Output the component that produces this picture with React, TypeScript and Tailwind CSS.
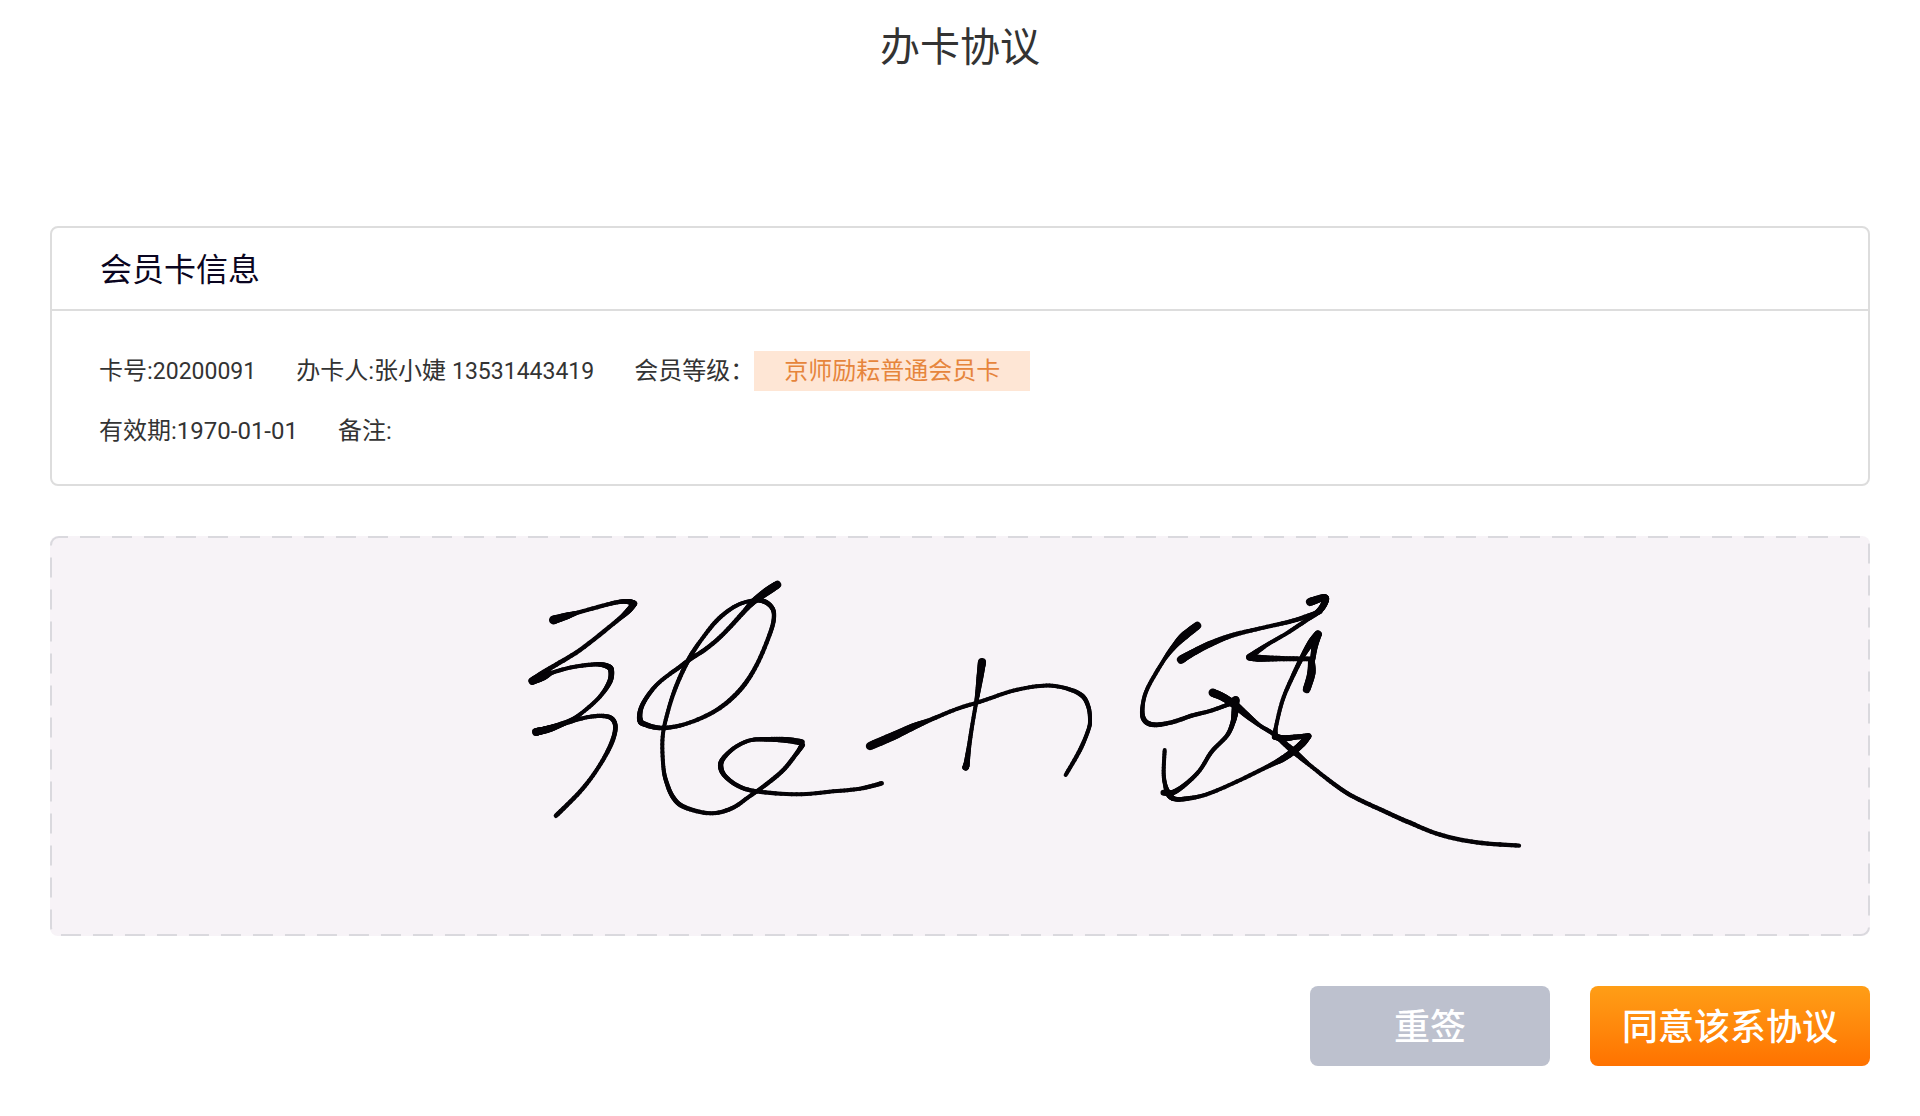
type Point = [x: number, y: number, width: number];

const FONT = "font-['Roboto','Noto_Sans_CJK_SC',sans-serif]";

// Pen strokes: x, y and pen width at each sampled point
const strokes: Point[][] = [
  // 张
  [[160, 180, 26], [200, 168, 20], [240, 156, 11], [345, 128, 12], [385, 125, 14], [402, 131, 18]],
  [[402, 131, 18], [385, 152, 17], [350, 183, 12], [240, 270, 12], [150, 325, 13], [97, 363, 22]],
  [[97, 363, 22], [130, 351, 20], [160, 337, 11], [220, 321, 11], [290, 313, 12], [325, 320, 16], [334, 335, 16], [328, 368, 15], [295, 415, 11], [240, 463, 11], [205, 484, 12], [150, 505, 18], [108, 516, 22]],
  [[108, 516, 22], [150, 506, 20], [200, 489, 11], [260, 472, 11], [310, 468, 12], [338, 478, 13], [346, 508, 13], [330, 560, 13], [290, 630, 11], [240, 695, 12], [168, 767, 13]],
  [[832, 74, 22], [800, 95, 24], [760, 125, 18], [730, 157, 13], [670, 222, 12], [620, 265, 12], [570, 298, 12], [540, 320, 12], [480, 365, 11], [445, 405, 12], [423, 445, 13], [420, 480, 16], [435, 493, 15], [485, 504, 13], [560, 491, 11], [650, 450, 12], [720, 390, 13], [770, 315, 12], [812, 215, 12], [822, 165, 12], [812, 138, 13], [785, 122, 14], [745, 124, 10], [700, 142, 11], [650, 182, 12], [600, 245, 11], [565, 300, 13], [530, 375, 12], [505, 450, 11], [488, 530, 11], [490, 620, 11], [500, 668, 12], [520, 713, 13], [553, 741, 13], [630, 760, 11], [695, 745, 12], [750, 708, 11], [800, 672, 12], [850, 630, 12], [890, 580, 12], [907, 555, 15]],
  [[905, 547, 18], [860, 540, 17], [800, 538, 13], [750, 541, 11], [705, 562, 11], [670, 595, 13], [662, 620, 15], [675, 648, 13], [715, 678, 12], [770, 694, 12], [890, 703, 11], [1000, 694, 11], [1080, 686, 11], [1145, 670, 13]],
  // 小
  [[1110, 558, 24], [1180, 528, 24], [1240, 500, 20], [1290, 480, 12], [1370, 447, 11], [1450, 422, 11], [1540, 392, 11], [1630, 377, 11], [1695, 384, 11], [1745, 406, 13], [1765, 440, 12], [1770, 480, 11], [1765, 510, 11], [1740, 570, 12], [1697, 645, 11]],
  [[1446, 306, 24], [1440, 350, 20], [1433, 400, 14], [1428, 430, 11], [1416, 500, 11], [1407, 560, 12], [1400, 610, 17], [1397, 622, 19]],
  // 婕
  [[2092, 197, 22], [2050, 230, 24], [2020, 262, 16], [1990, 303, 11], [1945, 380, 11], [1929, 430, 11], [1930, 475, 14], [1958, 494, 14], [2015, 487, 12], [2075, 467, 12], [2130, 453, 11], [2185, 433, 12], [2207, 420, 22]],
  [[2207, 420, 22], [2205, 455, 20], [2198, 490, 14], [2180, 528, 12], [2135, 575, 12], [2100, 630, 11], [2060, 670, 12], [2020, 697, 15], [1990, 698, 16]],
  [[1994, 570, 11], [1991, 640, 11], [1997, 680, 12], [2008, 705, 18], [2025, 717, 13], [2060, 716, 13], [2120, 703, 11], [2210, 665, 11], [2310, 616, 12], [2350, 595, 18], [2385, 570, 20], [2410, 547, 20], [2426, 528, 16]],
  [[2426, 528, 16], [2390, 531, 14], [2350, 535, 18], [2325, 530, 18]],
  [[2325, 530, 18], [2328, 500, 11], [2348, 420, 11], [2380, 345, 12], [2410, 285, 14], [2435, 245, 20], [2454, 223, 22]],
  [[2454, 223, 22], [2444, 260, 18], [2438, 300, 14]],
  [[2043, 299, 24], [2075, 280, 20], [2130, 252, 18], [2200, 225, 13], [2290, 203, 11], [2380, 182, 12], [2460, 155, 14]],
  [[2430, 126, 24], [2470, 113, 20], [2476, 122, 20], [2460, 150, 18], [2420, 180, 12], [2360, 220, 11], [2300, 255, 11], [2248, 291, 18]],
  [[2248, 292, 18], [2280, 295, 20], [2360, 296, 14], [2434, 297, 13]],
  [[2434, 300, 18], [2434, 340, 24], [2420, 388, 22]],
  [[2138, 398, 24], [2170, 412, 22], [2205, 435, 22], [2240, 465, 18], [2280, 497, 11], [2320, 522, 12], [2380, 573, 18], [2435, 620, 11], [2510, 678, 12], [2560, 710, 12], [2640, 748, 12], [2720, 784, 13], [2820, 824, 12], [2930, 847, 12], [3057, 857, 12]],
];

const STEPS = 8;

function catmull(a: number, b: number, c: number, d: number, t: number) {
  return 0.5 * (2 * b + (c - a) * t + (2 * a - 5 * b + 4 * c - d) * t * t + (3 * b - a - 3 * c + d) * t * t * t);
}

// Split a stroke into short segments so that the pen width can change along it
function smooth(points: Point[]): Point[] {
  const out: Point[] = [points[0]];
  for (let i = 0; i < points.length - 1; i++) {
    const p0 = points[Math.max(i - 1, 0)];
    const p1 = points[i];
    const p2 = points[i + 1];
    const p3 = points[Math.min(i + 2, points.length - 1)];
    for (let s = 1; s <= STEPS; s++) {
      const t = s / STEPS;
      out.push([
        catmull(p0[0], p1[0], p2[0], p3[0], t),
        catmull(p0[1], p1[1], p2[1], p3[1], t),
        p1[2] + (p2[2] - p1[2]) * t,
      ]);
    }
  }
  return out;
}

function Signature() {
  return (
    <svg
      viewBox="-1350 -72 5460 1200"
      className="w-full h-full"
      stroke="#050307"
      strokeLinecap="round"
      role="img"
      aria-label="签名"
    >
      {strokes.map((stroke, i) => {
        const pts = smooth(stroke);
        return (
          <g key={i}>
            {pts.slice(1).map(([x, y, w], j) => (
              <line key={j} x1={pts[j][0]} y1={pts[j][1]} x2={x} y2={y} strokeWidth={w + 1} />
            ))}
          </g>
        );
      })}
    </svg>
  );
}

function DashedBorder() {
  return (
    <svg className="absolute inset-0 w-full h-full p-px overflow-visible" aria-hidden="true">
      <rect
        width="100%"
        height="100%"
        rx="8"
        fill="none"
        stroke="#dad9de"
        strokeWidth="2"
        strokeDasharray="20 12"
        strokeDashoffset="11"
      />
    </svg>
  );
}

export default function App() {
  return (
    <div className={`min-h-screen bg-white px-[50px] pb-[50px] text-[#333333] ${FONT}`}>
      <header className="h-[226px] pt-[18px] text-center">
        <h1 className="text-[40px] leading-[60px]">办卡协议</h1>
      </header>

      <main>
        {/* Card info */}
        <section className="border-2 border-[#dddddd] rounded-lg">
          <h2 className="px-12 pt-[18px] pb-[15px] border-b-2 border-[#dddddd] text-[32px] leading-12 text-[#0a0520]">
            会员卡信息
          </h2>
          <div className="px-[47px] pt-10 pb-[33px] space-y-5 text-2xl leading-10">
            <div className="flex gap-10">
              <span>
                卡号:<span className="text-[23px] leading-none">20200091</span>
              </span>
              <span>
                办卡人:张小婕 <span className="text-[23px] leading-none">13531443419</span>
              </span>
              <div className="flex">
                <span>会员等级：</span>
                <span className="px-[30px] bg-[#fee6d5] text-[#e6853c]">京师励耘普通会员卡</span>
              </div>
            </div>
            <div className="flex gap-10">
              <span>有效期:1970-01-01</span>
              <span>备注:</span>
            </div>
          </div>
        </section>

        {/* Signature pad */}
        <section className="relative mt-[50px] h-[400px] rounded-lg bg-[#f7f3f7]">
          <DashedBorder />
          <Signature />
        </section>
      </main>

      <footer className="mt-[50px] flex justify-end gap-10 text-4xl font-medium text-white">
        <button type="button" className="w-60 h-20 pt-1 rounded-lg bg-[#bdc1ce]">
          重签
        </button>
        <button type="button" className="w-[280px] h-20 pt-1 rounded-lg bg-linear-to-b from-[#ff9e16] to-[#ff7200]">
          同意该系协议
        </button>
      </footer>
    </div>
  );
}
